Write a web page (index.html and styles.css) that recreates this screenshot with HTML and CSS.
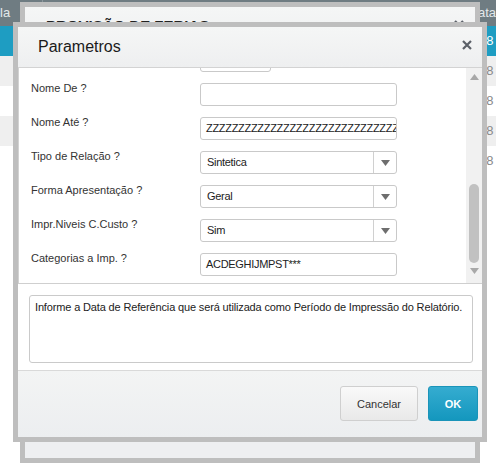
FILE: index.html
```html
<!DOCTYPE html>
<html>
<head>
<meta charset="utf-8">
<link rel="stylesheet" href="styles.css">
<title>Parametros</title>
</head>
<body>
<div class="grid">
  <div class="grid-head">
    <span class="col-a">la</span>
    <span class="col-b"></span>
    <span class="col-c">Data</span>
  </div>
  <div class="grid-row sel"><span class="col-a"></span><span class="col-b"></span><span class="col-c">98</span></div>
  <div class="grid-row alt"><span class="col-a"></span><span class="col-b"></span><span class="col-c">98</span></div>
  <div class="grid-row"><span class="col-a"></span><span class="col-b"></span><span class="col-c">98</span></div>
  <div class="grid-row alt"><span class="col-a"></span><span class="col-b"></span><span class="col-c">98</span></div>
  <div class="grid-row"><span class="col-a"></span><span class="col-b"></span><span class="col-c">98</span></div>
</div>

<!-- dialog behind -->
<div class="dlg dlg-back">
  <div class="dlg-head back-head">
    <span class="back-title">PROVISÃO DE FERIAS</span>
    <svg class="close" width="10" height="10" viewBox="0 0 10 10"><path d="M1 1L9 9M9 1L1 9" stroke="#5b6068" stroke-width="2.2"/></svg>
  </div>
</div>

<!-- parameters dialog -->
<div class="dlg dlg-front">
  <div class="dlg-head">
    <h1>Parametros</h1>
    <svg class="close" width="10" height="10" viewBox="0 0 10 10"><path d="M1 1L9 9M9 1L1 9" stroke="#5b6068" stroke-width="2.2"/></svg>
  </div>

  <div class="params">
    <div class="params-view">
      <div class="params-list">
        <div class="prow">
          <label></label>
          <div class="field short"></div>
        </div>
        <div class="prow">
          <label>Nome De ?</label>
          <div class="field"></div>
        </div>
        <div class="prow">
          <label>Nome Até ?</label>
          <div class="field">ZZZZZZZZZZZZZZZZZZZZZZZZZZZZZZZZ</div>
        </div>
        <div class="prow">
          <label>Tipo de Relação ?</label>
          <div class="field select"><span class="val">Sintetica</span><span class="arrow"><svg width="9" height="6" viewBox="0 0 9 6"><path d="M0 0H9L4.5 6Z" fill="#6e6e6e"/></svg></span></div>
        </div>
        <div class="prow">
          <label>Forma Apresentação ?</label>
          <div class="field select"><span class="val">Geral</span><span class="arrow"><svg width="9" height="6" viewBox="0 0 9 6"><path d="M0 0H9L4.5 6Z" fill="#6e6e6e"/></svg></span></div>
        </div>
        <div class="prow">
          <label>Impr.Niveis C.Custo ?</label>
          <div class="field select"><span class="val">Sim</span><span class="arrow"><svg width="9" height="6" viewBox="0 0 9 6"><path d="M0 0H9L4.5 6Z" fill="#6e6e6e"/></svg></span></div>
        </div>
        <div class="prow">
          <label>Categorias a Imp. ?</label>
          <div class="field">ACDEGHIJMPST***</div>
        </div>
      </div>
    </div>
    <div class="scrollbar">
      <svg width="9" height="6" viewBox="0 0 9 6"><path d="M0 6H9L4.5 0Z" fill="#a8a8a8"/></svg>
      <div class="thumb"></div>
      <svg class="sb-down" width="9" height="6" viewBox="0 0 9 6"><path d="M0 0H9L4.5 6Z" fill="#a8a8a8"/></svg>
    </div>
  </div>

  <div class="help">
    <div class="help-box">Informe a Data de Referência que será utilizada como Período de Impressão do Relatório.</div>
  </div>

  <div class="dlg-foot">
    <button class="btn">Cancelar</button>
    <button class="btn btn-ok">OK</button>
  </div>
</div>
</body>
</html>
```

FILE: styles.css
```css
html, body {
	margin: 0;
	padding: 0;
}
body {
	position: relative;
	width: 496px;
	height: 467px;
	overflow: hidden;
	background-color: white;
	font-family: "Liberation Sans", Arial, sans-serif;
	font-size: 11px;
	color: #333;
}

/* grid in the background */
.grid-head, .grid-row {
	display: flex;
	height: 30px;
	line-height: 30px;
	font-size: 13px;
	color: #8a8a8a;
}
.grid-head {
	height: 26px;
	line-height: 26px;
	background-color: #6f7c82;
	color: #e3e8ea;
}
.grid-row.sel {
	background-color: #1e9dc2;
	color: white;
}
.grid-row.alt {
	background-color: #efefef;
}
.col-a {
	width: 43px;
	border-right: 1px solid #8c979c;
}
.grid-row .col-a {
	border-right: none;
}
.col-b {
	width: 431px;
}
.col-c {
	padding-left: 5px;
}

/* dialogs */
.dlg {
	position: absolute;
	box-sizing: border-box;
	border: 5px solid #bebebe;
	background-color: #eeeff1;
}
.dlg-back {
	left: 20px;
	top: 2px;
	width: 460px;
	height: 461px;
}
.dlg-front {
	left: 13px;
	top: 22px;
	width: 474px;
	height: 420px;
	display: flex;
	flex-direction: column;
	background-color: white;
}
.dlg-head {
	display: flex;
	align-items: center;
	justify-content: space-between;
	box-sizing: border-box;
	height: 41px;
	padding: 0 10px 0 20px;
	background: linear-gradient(#f5f6f6, #eeeff0);
	border-bottom: 1px solid #d3d3d3;
}
.dlg-head h1 {
	margin: 0;
	font-size: 16px;
	font-weight: normal;
	color: #1b1b1b;
}
.close {
	align-self: flex-start;
	margin-top: 13px;
}
.back-head {
	align-items: flex-start;
	padding: 10px 11px 0 21px;
}
.back-head .close {
	margin-top: 3px;
}
.back-title {
	font-size: 15px;
	line-height: 18px;
	font-weight: bold;
	color: #222;
}

/* parameter list */
.params {
	display: flex;
	height: 216px;
	box-sizing: border-box;
	border-left: 1px solid #d2d2d2;
	border-bottom: 1px solid #cfcfcf;
}
.params-view {
	flex: 1;
	overflow: hidden;
}
.params-list {
	margin-top: -21px;
}
.prow {
	display: flex;
	height: 34px;
}
.prow label {
	width: 169px;
	padding-left: 12px;
	line-height: 14px;
	color: #333;
}
.field {
	box-sizing: border-box;
	width: 197px;
	height: 23px;
	margin-top: 2px;
	padding: 0 5px;
	border: 1px solid #c9c9c9;
	border-radius: 3px;
	line-height: 21px;
	letter-spacing: -0.3px;
	white-space: nowrap;
	overflow: hidden;
	color: #222;
}
.field.short {
	width: 71px;
}
.select {
	display: flex;
	padding: 0;
}
.select .val {
	flex: 1;
	padding-left: 6px;
}
.select .arrow {
	width: 22px;
	border-left: 1px solid #d0d0d0;
	display: flex;
	align-items: center;
	justify-content: center;
}

.scrollbar {
	width: 16px;
	display: flex;
	flex-direction: column;
	align-items: center;
	padding: 6px 0 9px;
	background-color: #f1f1f1;
	box-sizing: border-box;
}
.thumb {
	width: 10px;
	height: 79px;
	margin-top: 104px;
	border-radius: 5px;
	background-color: #c1c1c1;
}
.sb-down {
	margin-top: auto;
}

/* help text */
.help {
	height: 87px;
	padding: 11px 9px 0 11px;
	box-sizing: border-box;
	border-bottom: 1px solid #d9d9d9;
}
.help-box {
	height: 68px;
	box-sizing: border-box;
	padding: 4px 5px;
	border: 1px solid #cacaca;
	border-radius: 3px;
	line-height: 14px;
	letter-spacing: -0.15px;
	white-space: nowrap;
	color: #222;
}

/* buttons */
.dlg-foot {
	flex: 1;
	display: flex;
	justify-content: flex-end;
	align-items: flex-start;
	gap: 10px;
	padding: 15px 4px 0 0;
	background: linear-gradient(#f3f4f4, #eceef0);
}
.btn {
	height: 35px;
	width: 78px;
	font-family: "Liberation Sans", Arial, sans-serif;
	font-size: 11px;
	color: #333;
	border: 1px solid #cfcfcf;
	border-radius: 3px;
	background: linear-gradient(#f9f9f9, #e9e9e9);
}
.btn-ok {
	width: 50px;
	font-weight: bold;
	color: white;
	border-color: #1a94b9;
	background: linear-gradient(#35acd0, #1497be);
}
```
